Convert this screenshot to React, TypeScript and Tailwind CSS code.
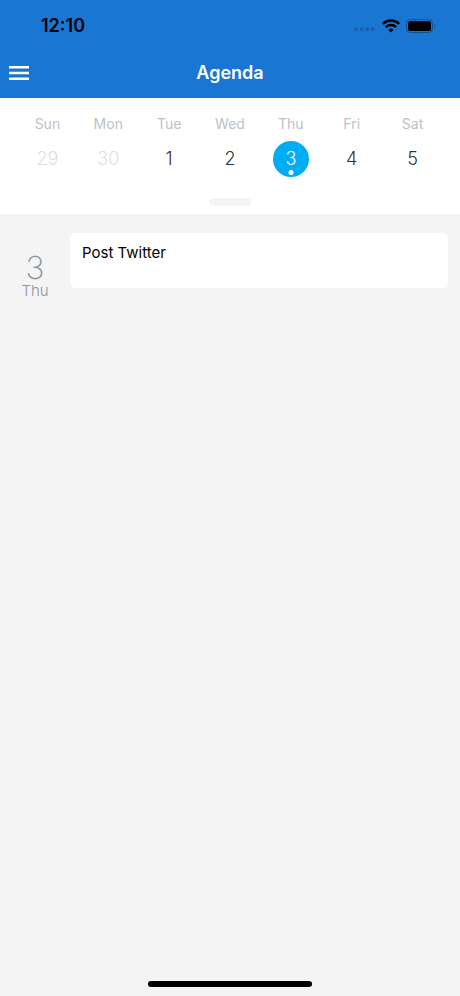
type Day = { name: string; date: number; state?: "muted" | "selected" };

const week: Day[] = [
  { name: "Sun", date: 29, state: "muted" },
  { name: "Mon", date: 30, state: "muted" },
  { name: "Tue", date: 1 },
  { name: "Wed", date: 2 },
  { name: "Thu", date: 3, state: "selected" },
  { name: "Fri", date: 4 },
  { name: "Sat", date: 5 },
];

function StatusBar() {
  return (
    <div className="flex h-[52px] items-center justify-between pr-6 pl-[41px] text-black">
      <span className="text-lg leading-6 font-semibold">12:10</span>
      <div className="flex items-center gap-[6px]">
        <svg width="22" height="12" viewBox="0 0 22 12" className="fill-[#1a5fae]" aria-hidden="true">
          <rect x="0.5" y="7.5" width="3.500" height="3.500" rx="1" />
          <rect x="6" y="7.5" width="3.500" height="3.500" rx="1" />
          <rect x="11.500" y="7.5" width="3.500" height="3.500" rx="1" />
          <rect x="17" y="7.5" width="3.500" height="3.500" rx="1" />
        </svg>
        <svg width="18" height="14" viewBox="0 0 18 14" fill="none" aria-hidden="true">
          <path d="M0.800 4.900a11.600 11.600 0 0 1 16.400 0" stroke="black" strokeWidth="2.500" />
          <path d="M3.800 8.100a7.400 7.400 0 0 1 10.400 0" stroke="black" strokeWidth="2.400" />
          <path d="M9 13.400 6.300 10.700a3.900 3.900 0 0 1 5.400 0z" fill="black" />
        </svg>
        <svg width="30" height="14" viewBox="0 0 30 14" fill="none" aria-hidden="true">
          <rect x="0.5" y="0.5" width="26" height="13" rx="4" stroke="#124f8f" />
          <rect x="2" y="2" width="23" height="10" rx="2.5" fill="black" />
          <path d="M28 5v4c1.600-.7 1.600-3.300 0-4z" fill="#124f8f" />
        </svg>
      </div>
    </div>
  );
}

function NavBar() {
  return (
    <div className="grid h-[46px] grid-cols-[1fr_auto_1fr] items-start px-2 pt-[9px]">
      <button type="button" aria-label="Open menu" className="flex h-6 items-center justify-self-start">
        <svg width="22" height="16" viewBox="0 0 22 16" className="fill-white" aria-hidden="true">
          <path d="M1 1h20v2.500H1zM1 6.700h20v2.500H1zM1 12.400h20v2.500H1z" />
        </svg>
      </button>
      <h1 className="text-lg leading-6 font-semibold text-white">Agenda</h1>
    </div>
  );
}

function DayCell({ day }: { day: Day }) {
  const tone =
    day.state === "selected"
      ? "bg-[#00adf5] text-white"
      : day.state === "muted"
        ? "text-[#dcdfe2]"
        : "text-[#2d3338]";
  return (
    <div className="flex flex-col items-center gap-[7px]">
      <span className="text-sm leading-5 text-[#bcc1c6]">{day.name}</span>
      <button
        type="button"
        className={`relative flex size-9 items-center justify-center rounded-full text-lg font-light ${tone}`}
      >
        {day.date}
        {day.state === "selected" && (
          <span className="absolute bottom-[2px] left-1/2 size-[5px] -translate-x-1/2 rounded-full bg-white" />
        )}
      </button>
    </div>
  );
}

export default function App() {
  return (
    <div className="flex min-h-screen flex-col bg-[#f4f4f4] font-['Inter',sans-serif]">
      <header className="bg-[#1976d2]">
        <StatusBar />
        <NavBar />
      </header>

      <section className="flex flex-col bg-white pt-4 pb-2">
        <div className="grid grid-cols-7 px-[17px]">
          {week.map((day) => (
            <DayCell key={day.name} day={day} />
          ))}
        </div>
        <button
          type="button"
          aria-label="Expand calendar"
          className="mt-[21px] h-2 w-[42px] self-center rounded-full bg-[#f2f4f5]"
        />
      </section>

      <main className="flex flex-1 pt-[19px] pr-3">
        <div className="flex w-[70px] shrink-0 flex-col items-center pt-5 text-[#87939c]">
          <span className="text-[32px] leading-[30px] font-extralight">3</span>
          <span className="text-[15px] leading-4 font-light">Thu</span>
        </div>
        <article className="h-[55px] flex-1 self-start rounded-md bg-white px-3 pt-2">
          <h2 className="text-[15px] leading-6 text-black">Post Twitter</h2>
        </article>
      </main>

      <footer className="flex justify-center pb-[9px]">
        <div className="h-[6px] w-[164px] rounded-full bg-black" />
      </footer>
    </div>
  );
}
